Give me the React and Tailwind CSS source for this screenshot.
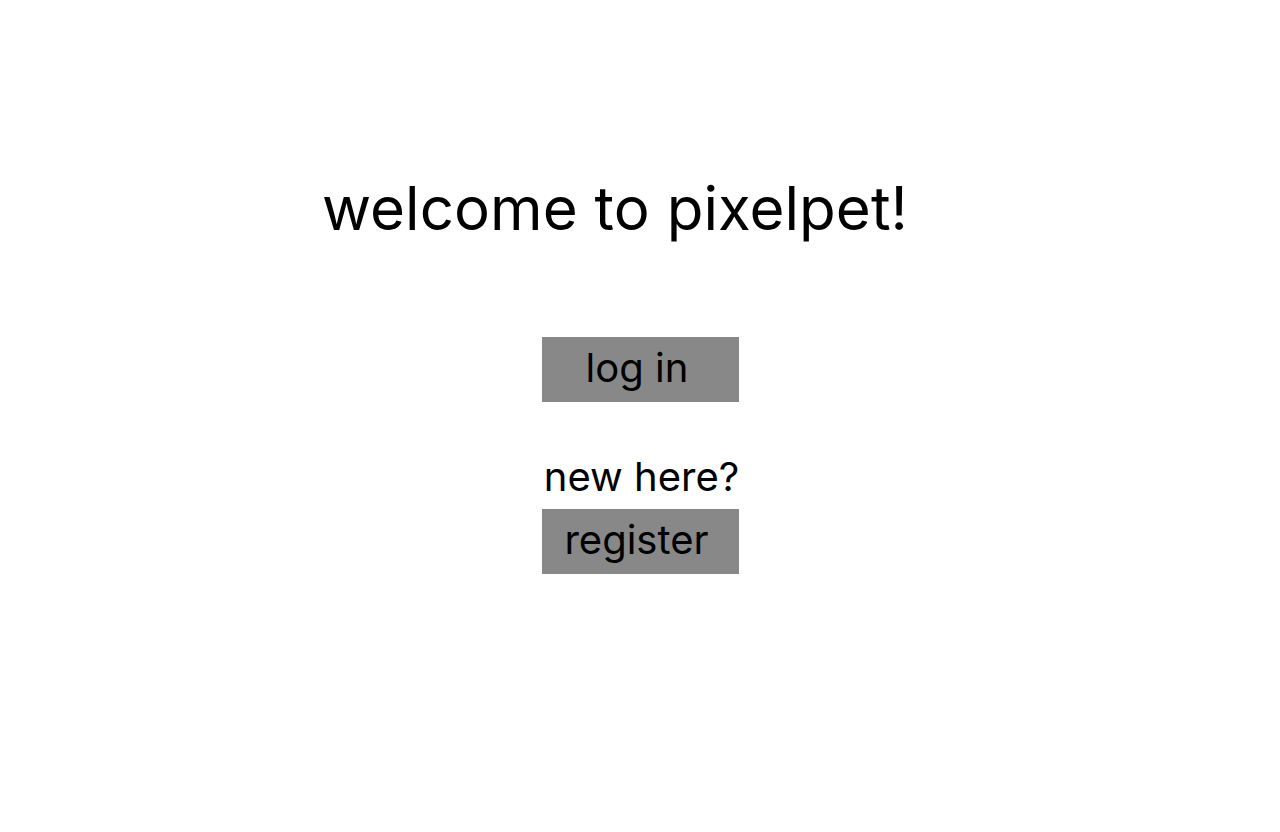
export default function App() {
  return (
    <div className="w-[1280px] h-[832px] bg-white relative" style={{ fontFamily: "Inter, sans-serif" }}>
      <div className="pt-[172px] pl-[322px]">
        <h1 className="text-[60px] leading-[72px] text-black font-normal tracking-[0.05px]">welcome to pixelpet!</h1>
      </div>
      <div className="flex flex-col items-center mt-[93px] pl-[1px]">
        <button className="w-[197px] h-[65px] bg-[#888888] text-[40px] text-black pr-[7px] pb-[4px] leading-none">log in</button>
        <div className="mt-[51px] ml-[2px] text-[40px] leading-[48px] text-black">new here?</div>
        <button className="w-[197px] h-[65px] mt-[8px] bg-[#888888] text-[40px] text-black pr-[8px] pb-[4px] leading-none">register</button>
      </div>
    </div>
  );
}
